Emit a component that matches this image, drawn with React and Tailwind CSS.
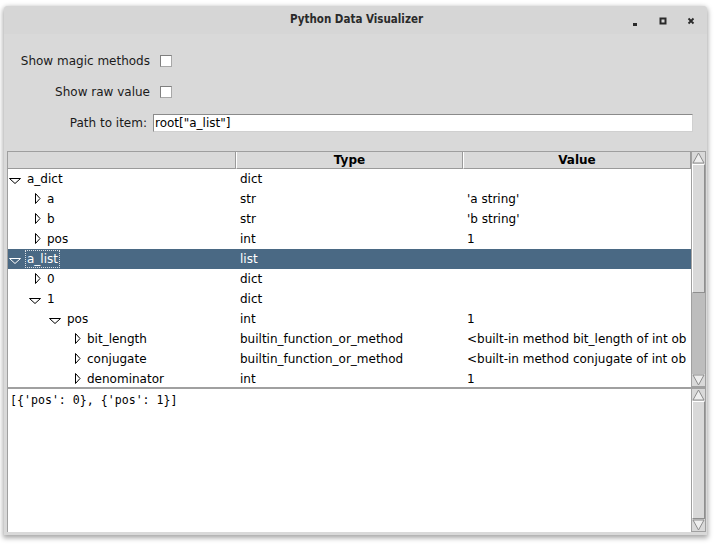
import React from "react";

const rows = [
  { l: 0, t: "a_dict", s: "exp", type: "dict", v: "" },
  { l: 1, t: "a", s: "col", type: "str", v: "'a string'" },
  { l: 1, t: "b", s: "col", type: "str", v: "'b string'" },
  { l: 1, t: "pos", s: "col", type: "int", v: "1" },
  { l: 0, t: "a_list", s: "exp", type: "list", v: "", sel: true },
  { l: 1, t: "0", s: "col", type: "dict", v: "" },
  { l: 1, t: "1", s: "exp", type: "dict", v: "" },
  { l: 2, t: "pos", s: "exp", type: "int", v: "1" },
  { l: 3, t: "bit_length", s: "col", type: "builtin_function_or_method", v: "<built-in method bit_length of int ob" },
  { l: 3, t: "conjugate", s: "col", type: "builtin_function_or_method", v: "<built-in method conjugate of int ob" },
  { l: 3, t: "denominator", s: "col", type: "int", v: "1" },
];

function Indicator({ s }) {
  return (
    <svg width="12" height="20" viewBox="0 0 12 20" className="shrink-0">
      {s === "exp" ? (
        <polygon points="0.5,9.5 11.5,9.5 6,14.5" fill="none" stroke="currentColor" strokeWidth="1" />
      ) : (
        <polygon points="6.5,4.5 11,9.5 6.5,14.5" fill="none" stroke="currentColor" strokeWidth="1" />
      )}
    </svg>
  );
}

function Arrow({ dir }) {
  return (
    <div className="h-[12px] w-full bg-[#d9d9d9] flex items-center justify-center shrink-0">
      <svg width="13" height="12" viewBox="0 0 13 12">
        {dir === "up" ? (
          <polygon points="6.5,1 12,11 1,11" fill="#eeeeee" stroke="#8c8c8c" strokeWidth="1" />
        ) : (
          <polygon points="1,1 12,1 6.5,11" fill="#eeeeee" stroke="#8c8c8c" strokeWidth="1" />
        )}
      </svg>
    </div>
  );
}

function TreeRow({ r }) {
  return (
    <div
      className={
        r.sel
          ? "flex h-[20px] shrink-0 bg-[#4a6984] text-white"
          : "flex h-[20px] shrink-0 text-black"
      }
    >
      <div className="w-[228px] flex items-center overflow-hidden whitespace-nowrap" style={{ paddingLeft: 1 + 20 * r.l }}>
        <Indicator s={r.s} />
        {r.sel ? (
          <span className="ml-[4px] border border-dotted border-[#d8dde3] px-[1px] leading-[16px]">{r.t}</span>
        ) : (
          <span className="ml-[6px]">{r.t}</span>
        )}
      </div>
      <div className="w-[227px] pl-[4px] leading-[20px] overflow-hidden whitespace-nowrap">{r.type}</div>
      <div className="w-[228px] pl-[4px] leading-[20px] overflow-hidden whitespace-nowrap">{r.v}</div>
    </div>
  );
}

function Checkbox() {
  return (
    <div className="ml-[9px] w-[12px] h-[12px] bg-white border border-t-[#7f7f7f] border-l-[#7f7f7f] border-r-[#a8a8a8] border-b-[#a8a8a8]" />
  );
}

export default function App() {
  return (
    <div className="w-[716px] h-[544px] bg-white pt-[6px] pl-[4px] font-['DejaVu_Sans','Liberation_Sans',sans-serif] text-[12px] text-black">
      <div className="w-[703px] h-[529px] flex flex-col bg-[#d9d9d9] rounded-t-[4px] shadow-[0_2px_5px_1px_rgba(0,0,0,0.35)]">
        {/* Title bar */}
        <div className="h-[28px] shrink-0 grid grid-cols-[1fr_auto_1fr] items-center bg-[#d6d6d6] rounded-t-[4px]">
          <div />
          <div className="font-['DejaVu_Sans_Condensed','DejaVu_Sans',sans-serif] font-bold text-[11.5px] text-[#2a2a2a] pl-[2px]">
            Python Data Visualizer
          </div>
          <div className="flex justify-end pr-[2px]">
            <div className="w-[28px] h-[28px] flex items-center justify-center">
              <svg width="8" height="8" viewBox="0 0 8 8" className="mt-[3px]">
                <rect x="2" y="5" width="4" height="3" fill="#2a2a2a" />
              </svg>
            </div>
            <div className="w-[28px] h-[28px] flex items-center justify-center">
              <svg width="8" height="8" viewBox="0 0 8 8" className="mt-[2px]">
                <rect x="1.5" y="1.5" width="5" height="5" fill="none" stroke="#2a2a2a" strokeWidth="2" />
              </svg>
            </div>
            <div className="w-[28px] h-[28px] flex items-center justify-center">
              <svg width="8" height="8" viewBox="0 0 8 8" className="mt-[2px]">
                <path d="M1.5 1.5 L6.5 6.5 M6.5 1.5 L1.5 6.5" stroke="#2a2a2a" strokeWidth="1.8" />
              </svg>
            </div>
          </div>
        </div>

        {/* Form */}
        <div className="h-[117px] shrink-0 pt-[11px] pr-[14px] grid grid-cols-[147px_1fr] grid-rows-[31px_31px_31px] items-center">
          <div className="text-right pr-[1px] text-[#1a1a1a] whitespace-nowrap">Show magic methods</div>
          <div className="flex items-center"><Checkbox /></div>
          <div className="text-right pr-[1px] text-[#1a1a1a]">Show raw value</div>
          <div className="flex items-center"><Checkbox /></div>
          <div className="text-right pr-[4px] text-[#1a1a1a]">Path to item:</div>
          <div className="ml-[2px] h-[18px] bg-white border border-t-[#8a8a8a] border-l-[#8a8a8a] border-r-[#d0d0d0] border-b-[#d0d0d0] pl-[1px] leading-[16px] text-black">
            root["a_list"]
          </div>
        </div>

        {/* Tree */}
        <div className="h-[236px] shrink-0 ml-[3px] mr-[1px] flex">
          <div className="w-[684px] flex flex-col border-l border-t border-[#9e9e9e] bg-white overflow-hidden">
            <div className="h-[17px] shrink-0 flex bg-[#d9d9d9] font-bold">
              <div className="w-[228px] border-b border-r border-b-[#9a9a9a] border-r-[#9a9a9a]" />
              <div className="w-[227px] border-b border-r border-l border-l-white border-b-[#9a9a9a] border-r-[#9a9a9a] text-center leading-[16px]">Type</div>
              <div className="w-[228px] border-b border-r border-l border-l-white border-b-[#9a9a9a] border-r-[#9a9a9a] text-center leading-[16px]">Value</div>
            </div>
            {rows.map((r, i) => (
              <TreeRow key={i} r={r} />
            ))}
          </div>
          <div className="w-[15px] h-full flex flex-col border border-[#a0a0a0] bg-[#bdbdbd]">
            <Arrow dir="up" />
            <div className="h-[129px] shrink-0 bg-[#d9d9d9] border border-t-white border-l-white border-r-[#8f8f8f] border-b-[#8f8f8f]" />
            <div className="flex-1" />
            <Arrow dir="down" />
          </div>
        </div>

        {/* Text */}
        <div className="h-[145px] shrink-0 ml-[3px] mr-[1px] flex">
          <div className="w-[684px] bg-white border-l border-t-2 border-[#a0a0a0] pl-[2px] pt-[3px] font-['DejaVu_Sans_Mono','Liberation_Mono',monospace] text-[11.6px] leading-[16px] text-black whitespace-pre">
            [{"{'pos': 0}, {'pos': 1}"}]
          </div>
          <div className="w-[15px] h-full flex flex-col border border-t-2 border-[#a0a0a0] bg-[#bdbdbd]">
            <Arrow dir="up" />
            <div className="flex-1 bg-[#d9d9d9] border border-t-white border-l-white border-r-[#8f8f8f] border-b-[#8f8f8f]" />
            <Arrow dir="down" />
          </div>
        </div>
      </div>
    </div>
  );
}
